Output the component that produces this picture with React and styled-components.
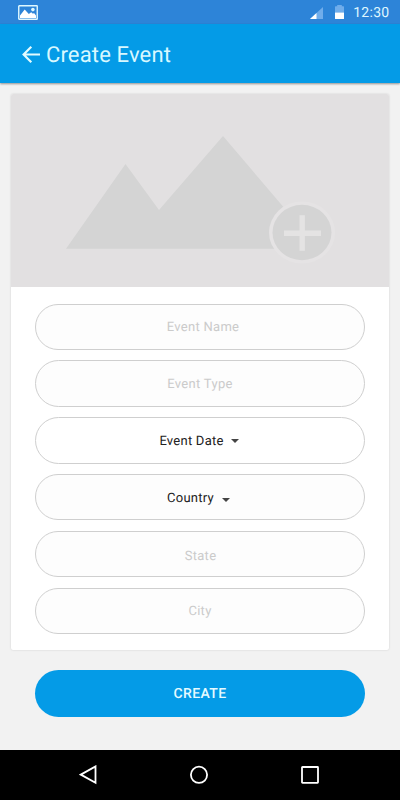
import React from 'react'
import styled, { createGlobalStyle } from 'styled-components'

const GlobalStyle = createGlobalStyle`
    * {
        box-sizing: border-box;
    }

    body {
        margin: 0;
        background: #f2f2f2;
        font-family: Roboto, "Liberation Sans", sans-serif;
        text-rendering: geometricPrecision;
    }
`

const App = () => {
  return (
    <Screen>
        <GlobalStyle />
        <StatusBar>
            <PictureIcon />
            <StatusRight>
                <SignalIcon />
                <BatteryIcon />
                <Clock>12:30</Clock>
            </StatusRight>
        </StatusBar>

        <AppBar>
            <BackButton aria-label="Back">
                <svg width="18" height="17" viewBox="0 0 18 17" fill="none" stroke="#e2fbff" strokeWidth="2.2">
                    <path d="M9.3 0.8L1.6 8.5L9.3 16.2M1.8 8.5H18" />
                </svg>
            </BackButton>
            <Title>Create Event</Title>
        </AppBar>

        <Content>
            <Card>
                <Cover>
                    <CoverArt />
                </Cover>
                <Form>
                    <Input placeholder="Event Name" $indent="6px" />
                    <Input placeholder="Event Type" />
                    <Select $fill="#fff" $nudge="1px">
                        Event Date
                        <Caret $gap="7px" />
                    </Select>
                    <Select>
                        Country
                        <Caret $gap="8px" $drop="3px" />
                    </Select>
                    <Input placeholder="State" $drop="4px" $indent="1px" />
                    <Input placeholder="City" />
                </Form>
            </Card>
            <CreateButton>CREATE</CreateButton>
        </Content>

        <NavBar>
            <svg width="18" height="20" viewBox="0 0 18 20">
                <path d="M1.8 9.6L16.5 1.4V17.8Z" />
            </svg>
            <svg width="20" height="20" viewBox="0 0 20 20">
                <circle cx="10" cy="9.8" r="8.1" />
            </svg>
            <svg width="18" height="18" viewBox="0 0 18 18">
                <rect x="1" y="1" width="16" height="15.8" rx="0.5" />
            </svg>
        </NavBar>
    </Screen>
  )
}

export default App

const PictureIcon = () => (
    <svg width="20" height="15" viewBox="0 0 20 15">
        <rect x="0.75" y="0.75" width="18.5" height="13.5" rx="0.5" fill="none" stroke="#dff8ff" strokeWidth="1.4" />
        <path d="M2 13V10.6L6.7 4.4L10.8 9L13.2 7.2L15 8.8L16 8L18 10.4V13Z" fill="#fff" />
        <circle cx="14.9" cy="4.6" r="1.8" fill="#dff8ff" />
    </svg>
)

const SignalIcon = () => (
    <svg width="13" height="12" viewBox="0 0 13 12">
        <path d="M0 12L13 0V12Z" fill="#70adeb" />
        <path d="M0 12L6.5 6V12Z" fill="#fff" />
    </svg>
)

const BatteryIcon = () => (
    <svg width="9" height="14" viewBox="0 0 9 14">
        <path d="M0 7.5V1.8Q0 1.2 0.6 1.2H2.2V0H6.8V1.2H8.4Q9 1.2 9 1.8V7.5Z" fill="#70adeb" />
        <path d="M0 7.5H9V13.4Q9 14 8.4 14H0.6Q0 14 0 13.4Z" fill="#fff" />
    </svg>
)

const CoverArt = () => (
    <svg width="378" height="193" viewBox="0 0 378 193">
        <path d="M55 154.7L114.5 70L148 116L212 42L308 154.7Z" fill="#d4d4d4" />
        <ellipse cx="291" cy="138.5" rx="33" ry="31" fill="#e5e3e4" />
        <ellipse cx="291" cy="138.5" rx="29.5" ry="27.7" fill="#d4d4d4" />
        <path d="M273 139.2H310M291.2 121.3V156.7" stroke="#e4e3e3" strokeWidth="5.4" />
    </svg>
)

const Screen = styled.div`
    display: flex;
    flex-direction: column;
    width: 400px;
    height: 800px;
    overflow: hidden;
    background: #f2f2f2;
`

const StatusBar = styled.div`
    display: flex;
    justify-content: space-between;
    align-items: center;
    height: 24px;
    padding: 1px 10.5px 0 18px;
    background: #2d84d8;
`

const StatusRight = styled.div`
    display: flex;
    align-items: center;

    svg {
        margin-right: 12px;
    }

    svg + svg {
        margin: 0 9px 1px 0;
    }
`

const Clock = styled.span`
    margin-top: 1px;
    color: #dff6ff;
    font-size: 14px;
    letter-spacing: 0.3px;
    line-height: 20px;
`

const AppBar = styled.header`
    display: flex;
    align-items: center;
    height: 59px;
    padding-left: 22px;
    background: #049be7;
    box-shadow: 0 1px 2px rgba(0, 0, 0, 0.4);
    z-index: 1;
`

const BackButton = styled.button`
    display: flex;
    margin: 2px 6px 0 0;
    padding: 0;
    border: none;
    background: none;
`

const Title = styled.h1`
    margin: 4px 0 0;
    color: #d8f8ff;
    font-size: 22px;
    font-weight: 400;
    letter-spacing: 0.15px;
    line-height: 28px;
`

const Content = styled.main`
    display: flex;
    flex-direction: column;
    flex: 1;
    padding: 11px 11px 0;
`

const Card = styled.section`
    height: 556px;
    border-radius: 2px;
    background: #fff;
    box-shadow: 0 0 2px rgba(0, 0, 0, 0.17);
    overflow: hidden;
`

const Cover = styled.div`
    height: 193px;
    background: #e2e0e1;

    svg {
        display: block;
    }
`

const Form = styled.form`
    display: flex;
    flex-direction: column;
    gap: 10.4px;
    padding: 16.7px 24px 0;
`

const Input = styled.input`
    height: 46.4px;
    padding: ${({ $drop }) => $drop || '2px'} 0 0 ${({ $indent }) => $indent || 0};
    border: 1px solid #cfcfcf;
    border-radius: 24px;
    background: #fdfdfd;
    font-family: inherit;
    font-size: 13px;
    letter-spacing: 0.3px;
    text-align: center;
    text-rendering: inherit;

    &::placeholder {
        color: #cbcbcb;
        opacity: 1;
    }
`

const Select = styled.div`
    display: flex;
    justify-content: center;
    align-items: center;
    height: 46.4px;
    padding: 2px 3px 0 ${({ $nudge }) => $nudge || 0};
    border: 1px solid #cfcfcf;
    border-radius: 24px;
    background: ${({ $fill }) => $fill || '#fdfdfd'};
    color: #222;
    font-size: 13px;
    letter-spacing: 0.25px;
`

const Caret = styled.span`
    margin-left: ${({ $gap }) => $gap};
    margin-top: ${({ $drop }) => $drop || 0};
    border: 4px solid transparent;
    border-top-color: #444;
    border-bottom: none;
`

const CreateButton = styled.button`
    height: 47px;
    margin: 20px 24px 0;
    border: none;
    border-radius: 24px;
    background: #049be7;
    color: #e6faff;
    font-family: inherit;
    font-size: 14px;
    font-weight: 500;
    letter-spacing: 0.4px;
    text-rendering: inherit;
`

const NavBar = styled.nav`
    display: flex;
    justify-content: space-between;
    align-items: center;
    height: 50px;
    padding: 0 81px 0 79px;
    background: #000;

    svg {
        fill: none;
        stroke: #fff;
        stroke-width: 1.8;
    }
`
